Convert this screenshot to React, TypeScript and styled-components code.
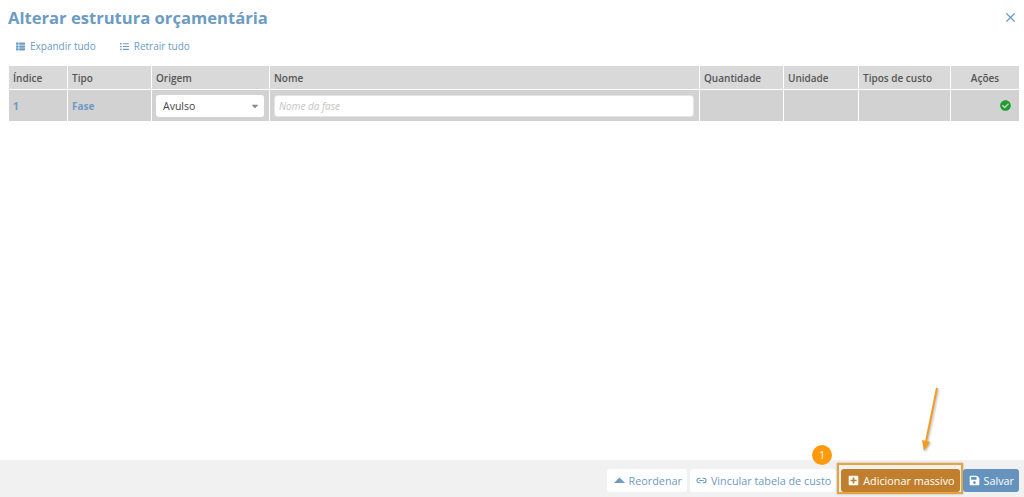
import { FC } from 'react';
import styled, { createGlobalStyle } from 'styled-components';
import { FaCheckCircle, FaPlusSquare, FaSave, FaThList, FaListUl, FaCaretDown } from 'react-icons/fa';
import { Link2, X } from 'lucide-react';

const blue = '#6c9bc4';
const columns = '59px 84px 118px 430px 84px 75px 92px 69px';

const Global = createGlobalStyle`
  html, body { margin: 0; padding: 0; background: #fff; }
  body { font-family: "Open Sans", "Liberation Sans", sans-serif; }
  * { box-sizing: border-box; }
`;

const Page = styled.div`
  position: relative;
  height: 497px;
  width: 1024px;
  overflow: hidden;
  display: flex;
  flex-direction: column;
`;

const Header = styled.header`
  display: flex;
  justify-content: space-between;
  align-items: center;
  padding: 3px 6px 0 8px;
  height: 32px;
`;

const Title = styled.h1`
  margin: 0;
  font-size: 16.6px;
  line-height: 22px;
  font-weight: 700;
  color: ${blue};
`;

const Close = styled.span`
  display: flex;
  color: ${blue};
`;

const Toolbar = styled.div`
  display: flex;
  gap: 24px;
  padding: 5px 0 0 16px;
  height: 34px;
`;

const ToolLink = styled.a`
  display: flex;
  align-items: center;
  height: 18px;
  gap: 5px;
  font-size: 10px;
  color: ${blue};
  svg { width: 9px; height: 9px; }
`;

const Table = styled.div`
  margin-left: 9px;
  width: 1011px;
`;

const Row = styled.div<{ $head?: boolean }>`
  display: grid;
  grid-template-columns: ${columns};
  height: ${p => (p.$head ? '23px' : '31px')};
  margin-bottom: ${p => (p.$head ? '1px' : '0')};
`;

const Cell = styled.div<{ $head?: boolean; $center?: boolean; $end?: boolean }>`
  display: flex;
  align-items: center;
  justify-content: ${p => (p.$center ? 'center' : p.$end ? 'flex-end' : 'flex-start')};
  padding: ${p => (p.$end ? '0 8px 0 0' : '0 4px')};
  margin-right: 1px;
  background: ${p => (p.$head ? '#d9d9d9' : '#d2d2d2')};
  font-size: 10px;
  font-weight: 600;
  color: #555;
`;

const BlueText = styled.span`
  color: ${blue};
  font-weight: 700;
`;

const Select = styled.div`
  width: 108px;
  height: 22px;
  background: #fff;
  border-radius: 3px;
  display: flex;
  align-items: center;
  justify-content: space-between;
  padding: 0 4px 0 7px;
  font-size: 10.5px;
  font-weight: 400;
  color: #444;
  svg { width: 10px; height: 10px; color: #888; }
`;

const NameInput = styled.div`
  width: 420px;
  height: 22px;
  background: #fff;
  border-radius: 3px;
  border: 1px solid #e4e4e4;
  display: flex;
  align-items: center;
  padding: 0 4px;
  font-size: 10px;
  font-weight: 400;
  font-style: italic;
  color: #c4c4c4;
`;

const Spacer = styled.div`
  flex: 1;
`;

const Footer = styled.footer`
  height: 37px;
  background: #f1f1f1;
  display: flex;
  justify-content: flex-end;
  align-items: flex-start;
  padding: 9px 5px 0 0;
`;

const FooterButton = styled.button<{ $tone?: 'light' | 'orange' | 'blue'; $after?: number; $left?: number }>`
  height: 23px;
  border: 0;
  border-radius: 3px;
  margin-right: ${p => p.$after ?? 0}px;
  padding: 0 5px 1px ${p => p.$left ?? 6}px;
  display: flex;
  align-items: center;
  gap: 4px;
  font-family: inherit;
  font-size: 10.8px;
  background: ${p => (p.$tone === 'orange' ? '#c17f2d' : p.$tone === 'blue' ? '#6593bd' : '#fff')};
  color: ${p => (p.$tone === 'orange' || p.$tone === 'blue' ? '#fff' : blue)};
  svg { width: 11px; height: 11px; flex: none; }
`;

const Highlight = styled.div`
  margin-top: -6px;
  height: 31px;
  padding: 4px 1px 0 2px;
  border: 2px solid #e8a33d;
  box-shadow: 0 0 2px rgba(0, 0, 0, 0.3);
  display: flex;
`;

const Badge = styled.span`
  position: absolute;
  left: 812px;
  top: 445px;
  width: 20px;
  height: 20px;
  border-radius: 50%;
  background: #ff9a0d;
  color: #fff;
  font-size: 10px;
  display: flex;
  align-items: center;
  justify-content: center;
`;

const Arrow = styled.svg`
  position: absolute;
  left: 915px;
  top: 380px;
  width: 30px;
  height: 80px;
  filter: drop-shadow(1px 1px 1px rgba(0, 0, 0, 0.3));
`;

const App: FC = () => (
  <Page>
    <Global />
    <Header>
      <Title>Alterar estrutura orçamentária</Title>
      <Close>
        <X size={15} strokeWidth={2} />
      </Close>
    </Header>
    <Toolbar>
      <ToolLink>
        <FaThList />
        Expandir tudo
      </ToolLink>
      <ToolLink>
        <FaListUl />
        Retrair tudo
      </ToolLink>
    </Toolbar>
    <Table>
      <Row $head>
        <Cell $head>Índice</Cell>
        <Cell $head>Tipo</Cell>
        <Cell $head>Origem</Cell>
        <Cell $head>Nome</Cell>
        <Cell $head>Quantidade</Cell>
        <Cell $head>Unidade</Cell>
        <Cell $head>Tipos de custo</Cell>
        <Cell $head $center>Ações</Cell>
      </Row>
      <Row>
        <Cell><BlueText>1</BlueText></Cell>
        <Cell><BlueText>Fase</BlueText></Cell>
        <Cell>
          <Select>
            Avulso
            <FaCaretDown />
          </Select>
        </Cell>
        <Cell>
          <NameInput>Nome da fase</NameInput>
        </Cell>
        <Cell />
        <Cell />
        <Cell />
        <Cell $end>
          <FaCheckCircle color="#1e9e2c" size={11} />
        </Cell>
      </Row>
    </Table>
    <Spacer />
    <Footer>
      <FooterButton $after={3} $left={7}>
        <svg viewBox="0 0 11 11">
          <path d="M5.5 2.5 L11 8 L0 8 Z" fill="currentColor" />
        </svg>
        Reordenar
      </FooterButton>
      <FooterButton $after={1}>
        <Link2 strokeWidth={2.4} />
        Vincular tabela de custo
      </FooterButton>
      <Highlight>
        <FooterButton $tone="orange" $left={7}>
          <FaPlusSquare />
          Adicionar massivo
        </FooterButton>
      </Highlight>
      <FooterButton $tone="blue">
        <FaSave />
        Salvar
      </FooterButton>
    </Footer>
    <Badge>1</Badge>
    <Arrow viewBox="0 0 30 80">
      <path d="M22 8 L11 62" stroke="#f39c1f" strokeWidth="2" fill="none" />
      <path d="M7 60 L15 62 L9 71 Z" fill="#f39c1f" />
    </Arrow>
  </Page>
);

export default App;
